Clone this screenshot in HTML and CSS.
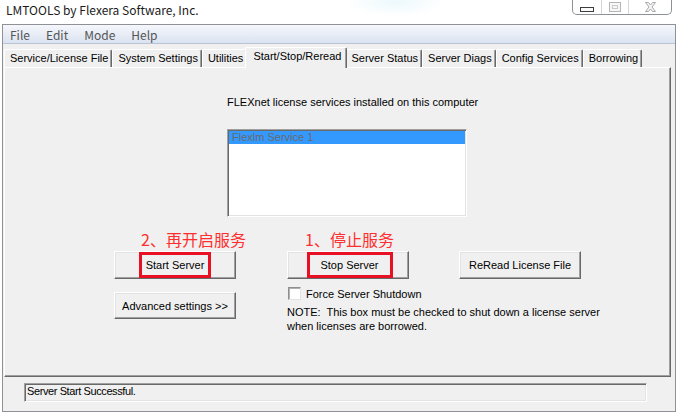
FILE: index.html
```html
<!DOCTYPE html>
<html lang="zh-CN">
<head>
    <meta charset="UTF-8">
    <title>LMTOOLS by Flexera Software, Inc.</title>
    <link rel="stylesheet" href="styles.css">
</head>
<body>

    <div class="titlebar">
        <span class="title">LMTOOLS by Flexera Software, Inc.</span>
        <div class="caption-buttons">
            <span class="cap-btn cap-min"><span class="min-icon"></span></span>
            <span class="cap-btn cap-max">
                <svg width="12" height="10" viewBox="0 0 12 10">
                    <rect x="0.5" y="0.5" width="11" height="9" fill="#f7f7f7" stroke="#b4b4b4"/>
                    <rect x="3.5" y="3.5" width="5" height="3" fill="none" stroke="#c9c9c9"/>
                </svg>
            </span>
            <span class="cap-btn cap-close">
                <svg width="11" height="10" viewBox="0 0 11 10">
                    <path d="M0.5 0.5H3.5L5.5 3L7.5 0.5H10.5L7 5L10.5 9.5H7.5L5.5 7L3.5 9.5H0.5L4 5Z" fill="#f5f5f5" stroke="#a9a9a9"/>
                </svg>
            </span>
        </div>
    </div>

    <div class="window">
        <div class="menubar">
            <span>File</span>
            <span>Edit</span>
            <span>Mode</span>
            <span>Help</span>
        </div>

        <div class="tabs">
            <span class="tab">Service/License File</span>
            <span class="tab">System Settings</span>
            <span class="tab">Utilities</span>
            <span class="tab active">Start/Stop/Reread</span>
            <span class="tab">Server Status</span>
            <span class="tab">Server Diags</span>
            <span class="tab">Config Services</span>
            <span class="tab">Borrowing</span>
        </div>

        <div class="panel">
            <p class="caption">FLEXnet license services installed on this computer</p>
            <div class="listbox">
                <div class="list-item selected">Flexlm Service 1</div>
            </div>

            <div class="controls">
                <span class="hint hint-start">2、再开启服务</span>
                <span class="hint hint-stop">1、停止服务</span>
                <span></span>

                <button class="btn"><span class="mark mark-start">Start Server</span></button>
                <button class="btn"><span class="mark mark-stop">Stop Server</span></button>
                <button class="btn">ReRead License File</button>

                <button class="btn btn-adv">Advanced settings &gt;&gt;</button>
                <div class="options">
                    <div class="check-row">
                        <span class="checkbox"></span>
                        <span>Force Server Shutdown</span>
                    </div>
                    <p class="note">NOTE:&nbsp; This box must be checked to shut down a license server<br>when licenses are borrowed.</p>
                </div>
            </div>
        </div>

        <div class="status">Server Start Successful.</div>
    </div>

</body>
</html>
```

FILE: styles.css
```css
body {
    margin: 0;
    background: #fff;
    font-family: "Liberation Sans", Arial, sans-serif;
    font-size: 11px;
    color: #000;
}
.titlebar {
    height: 24px;
    display: flex;
    justify-content: space-between;
    align-items: flex-start;
    background: radial-gradient(ellipse 50px 14px at 395px 2px, rgba(214, 242, 250, 0.45), rgba(255, 255, 255, 0));
}
.title {
    font-family: "Noto Sans CJK SC", "Noto Sans", sans-serif;
    font-size: 12px;
    line-height: 16px;
    padding: 2px 0 0 6px;
    color: #1b1b1b;
}
.caption-buttons {
    display: flex;
    height: 15px;
    margin: -1px 5px 0 0;
    border: 1px solid #8d9198;
    border-top: none;
    border-radius: 0 0 5px 5px;
    background: #fff;
}
.cap-btn {
    display: flex;
    align-items: center;
    justify-content: center;
    border-left: 1px solid #d3d6da;
}
.cap-btn:first-child {
    border-left: none;
}
.cap-min {
    width: 28px;
    align-items: flex-end;
    padding-bottom: 2px;
    box-sizing: border-box;
}
.cap-max {
    width: 26px;
}
.cap-close {
    width: 42px;
}
.min-icon {
    width: 12px;
    height: 3px;
    border: 1px solid #3d3d3d;
    background: #fafafa;
}
.window {
    margin-left: 2px;
    width: 674px;
    height: 388px;
    box-sizing: border-box;
    border: 1px solid #8e9297;
    background: #f0f0f0;
}
.menubar {
    display: flex;
    align-items: center;
    gap: 16px;
    padding: 1px 0 0 7px;
    box-sizing: border-box;
    height: 19px;
    border-bottom: 1px solid #b9c3d3;
    background: linear-gradient(#f5f7fb, #dbe3f1);
    font-family: "Noto Sans CJK SC", "Noto Sans", sans-serif;
    font-size: 12px;
    color: #555;
}
.tabs {
    display: flex;
    align-items: flex-end;
    height: 23px;
    padding-left: 1px;
    position: relative;
    z-index: 1;
}
.tab {
    height: 17px;
    line-height: 17px;
    padding: 0 3px 0 5px;
    border-top: 1px solid #fff;
    border-left: 1px solid #fff;
    border-right: 1px solid #696969;
    box-shadow: inset -1px 0 #a0a0a0;
    border-radius: 2px 2px 0 0;
    background: #f0f0f0;
    white-space: nowrap;
}
.tab.active {
    height: 20px;
    margin: 0 -2px -1px;
    padding: 0 5px 0 7px;
    position: relative;
    z-index: 2;
}
.panel {
    margin-left: 1px;
    width: 667px;
    height: 310px;
    box-sizing: border-box;
    border-top: 1px solid #fff;
    border-left: 1px solid #fff;
    border-right: 1px solid #696969;
    border-bottom: 1px solid #696969;
    box-shadow: inset -1px -1px #a0a0a0;
    overflow: hidden;
}
.caption {
    margin: 28px 0 0 222px;
    line-height: 13px;
}
.listbox {
    margin: 20px 0 0 222px;
    width: 240px;
    height: 88px;
    box-sizing: border-box;
    background: #fff;
    border: 1px solid;
    border-color: #a0a0a0 #fff #fff #a0a0a0;
    box-shadow: inset 1px 1px #696969, inset -1px -1px #e3e3e3;
    padding: 1px;
}
.list-item {
    height: 13px;
    line-height: 13px;
    padding-left: 3px;
}
.list-item.selected {
    background: #3399ff;
    color: #6a6a6a;
}
.controls {
    display: grid;
    grid-template-columns: 173px 172px 122px;
    margin: 12px 0 0 109px;
}
.hint {
    font-family: "Noto Sans CJK SC", sans-serif;
    font-size: 16px;
    line-height: 20px;
    color: #ff2e2e;
}
.hint-start {
    padding-left: 27px;
}
.hint-stop {
    padding-left: 18px;
}
.btn {
    width: 122px;
    height: 28px;
    margin-top: 2px;
    padding: 0;
    display: flex;
    align-items: center;
    justify-content: center;
    font: inherit;
    color: #000;
    background: #f0f0f0;
    border: 1px solid;
    border-color: #fff #696969 #696969 #fff;
    box-shadow: inset -1px -1px #a0a0a0, inset 1px 1px #e3e3e3;
}
.btn-adv {
    height: 27px;
    margin-top: 13px;
}
.mark {
    height: 26px;
    box-sizing: border-box;
    border: 3px solid #e81123;
    display: flex;
    align-items: center;
    justify-content: center;
}
.mark-start {
    width: 72px;
}
.mark-stop {
    width: 86px;
    margin-left: 3px;
}
.options {
    grid-column: 2 / span 2;
    padding-top: 8px;
    white-space: nowrap;
}
.check-row {
    display: flex;
    align-items: center;
    gap: 5px;
    height: 13px;
    margin-left: 1px;
}
.checkbox {
    width: 13px;
    height: 13px;
    box-sizing: border-box;
    background: #fff;
    border: 1px solid;
    border-color: #8f8f8f #e3e3e3 #e3e3e3 #8f8f8f;
    box-shadow: inset 1px 1px #b0b0b0;
}
.note {
    margin: 5px 0 0;
    line-height: 14px;
}
.status {
    margin: 6px 0 0 21px;
    width: 623px;
    height: 19px;
    box-sizing: border-box;
    padding-left: 2px;
    line-height: 15px;
    border: 1px solid;
    border-color: #a0a0a0 #fff #fff #a0a0a0;
    box-shadow: inset 1px 1px #696969, inset -1px -1px #e3e3e3;
    letter-spacing: -0.4px;
}
```
